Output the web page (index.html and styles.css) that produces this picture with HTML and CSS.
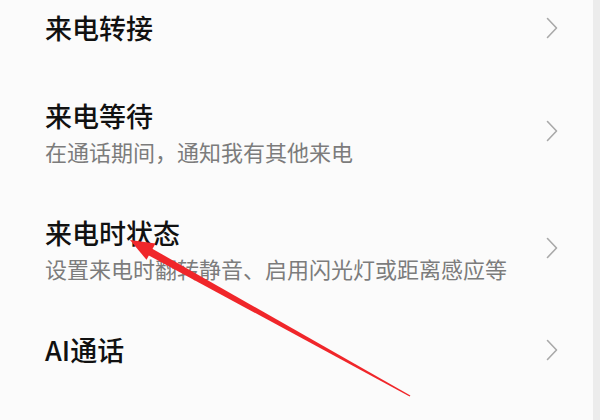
FILE: index.html
```html
<!DOCTYPE html>
<html lang="zh-CN">
<head>
<meta charset="utf-8">
<link rel="stylesheet" href="styles.css">
</head>
<body>
<div class="screen">
  <div class="list">
    <div class="row first">
      <div class="text"><div class="title">来电转接</div></div>
      <svg class="chev" viewBox="0 0 12 22"><path d="M1.5 1.5 L10.5 11 L1.5 20.5" /></svg>
    </div>
    <div class="row">
      <div class="text"><div class="title">来电等待</div><div class="sub">在通话期间，通知我有其他来电</div></div>
      <svg class="chev" viewBox="0 0 12 22"><path d="M1.5 1.5 L10.5 11 L1.5 20.5" /></svg>
    </div>
    <div class="row">
      <div class="text"><div class="title">来电时状态</div><div class="sub">设置来电时翻转静音、启用闪光灯或距离感应等</div></div>
      <svg class="chev" viewBox="0 0 12 22"><path d="M1.5 1.5 L10.5 11 L1.5 20.5" /></svg>
    </div>
    <div class="row">
      <div class="text"><div class="title">AI通话</div></div>
      <svg class="chev" viewBox="0 0 12 22"><path d="M1.5 1.5 L10.5 11 L1.5 20.5" /></svg>
    </div>
  </div>
  <div class="strip"></div>
  <svg class="arrow" viewBox="0 0 600 420" width="600" height="420">
    <polygon class="shaft" points="151,248 147,254.5 409.6,396.4 410.4,395.6" />
    <polygon class="head" points="130,240 155.5,243.5 146.5,259.8" />
  </svg>
</div>
</body>
</html>
```
FILE: styles.css
```css
html, body {
  margin: 0;
  padding: 0;
  background: #fbfbfb;
}
.screen {
  position: relative;
  width: 600px;
  height: 420px;
  overflow: hidden;
  display: flex;
  font-family: "Noto Sans CJK SC", "Noto Sans", sans-serif;
}
.list {
  flex: 1;
  display: flex;
  flex-direction: column;
  margin-top: -16px;
  background: #fbfbfb;
}
.strip {
  width: 7px;
  background: #ececec;
}
.row {
  display: flex;
  align-items: center;
  padding: 25px 35px 25px 45px;
  min-height: 38px;
}
.text {
  flex: 1;
}
.title {
  font-size: 27px;
  line-height: 38px;
  font-weight: 500;
  color: #111111;
}
.sub {
  font-size: 22px;
  line-height: 26px;
  margin-top: 3px;
  color: #7c7c7c;
}
.chev {
  width: 12px;
  height: 22px;
  flex: none;
}
.chev path {
  fill: none;
  stroke: #a9a9a9;
  stroke-width: 1.6;
  stroke-linecap: round;
  stroke-linejoin: round;
}
.arrow {
  position: absolute;
  left: 0;
  top: 0;
  pointer-events: none;
}
.shaft, .head {
  fill: #f0262a;
}
```
